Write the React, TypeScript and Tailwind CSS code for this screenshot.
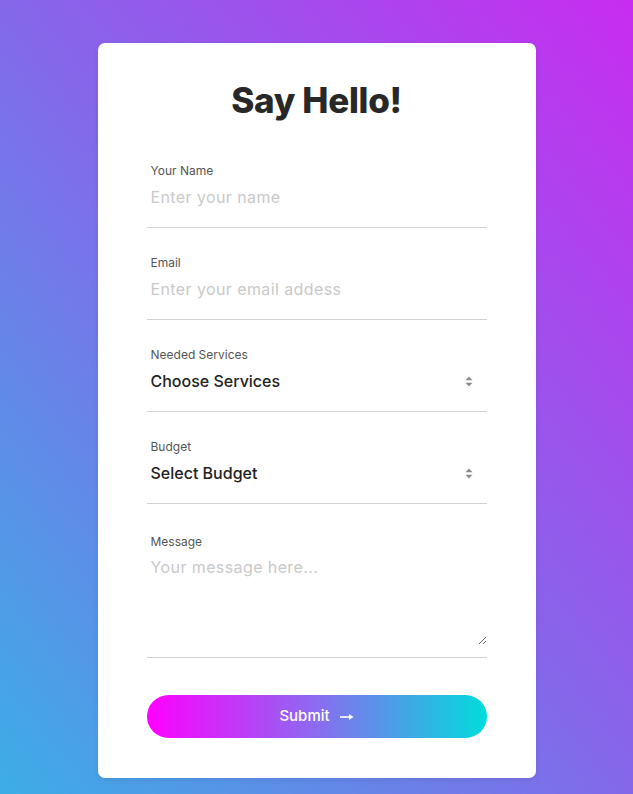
import React, { useState } from 'react';

const font = { fontFamily: 'Inter, "DejaVu Sans", sans-serif' };

function Field({ label, className, children }: { label: string; className?: string; children: React.ReactNode }) {
  return (
    <div className={'border-b-[1.5px] border-[#d2d2d2] pb-[12px] ' + (className ?? '')}>
      <label className="block h-[18px] pt-px pl-1 text-[12px] leading-[18px] text-[#555]">{label}</label>
      {children}
    </div>
  );
}

function Arrows() {
  return (
    <svg width="8" height="11" viewBox="0 0 8 11" className="text-[#8a8a8a]">
      <path d="M4 0.5 L7.5 4.2 L0.5 4.2 Z" fill="currentColor" />
      <path d="M4 10.5 L7.5 6.8 L0.5 6.8 Z" fill="currentColor" />
    </svg>
  );
}

function SelectField({ label, value }: { label: string; value: string }) {
  return (
    <Field label={label}>
      <div className="flex h-[36px] items-center justify-between pl-1 pr-[14px]">
        <span className="text-[16px] font-medium text-[#222]">{value}</span>
        <Arrows />
      </div>
    </Field>
  );
}

export default function App() {
  const [name, setName] = useState('');
  const [email, setEmail] = useState('');
  const [message, setMessage] = useState('');

  return (
    <div
      style={font}
      className="flex min-h-[794px] w-full justify-center bg-[linear-gradient(to_top_right,#3caee6,#8468ea_50%,#c82cf0)] pt-[43px] pb-[17px]"
    >
      <div className="w-[438px] rounded-[7px] bg-white px-[49px] pt-[33px] pb-[40px] shadow-[0_2px_6px_rgba(0,0,0,0.08)]">
        <h1 className="mb-[37px] text-center text-[35px] font-extrabold leading-[48px] tracking-[-0.3px] text-[#282828]">
          Say Hello!
        </h1>

        <div className="flex flex-col gap-[25px]">
          <Field label="Your Name">
            <input
              value={name}
              onChange={(e) => setName(e.target.value)}
              placeholder="Enter your name"
              className="block h-[36px] w-full pl-1 text-[16px] tracking-[0.4px] text-[#222] outline-none placeholder:text-[#c9c9c9]"
            />
          </Field>

          <Field label="Email">
            <input
              value={email}
              onChange={(e) => setEmail(e.target.value)}
              placeholder="Enter your email addess"
              className="block h-[36px] w-full pl-1 text-[16px] tracking-[0.4px] text-[#222] outline-none placeholder:text-[#c9c9c9]"
            />
          </Field>

          <SelectField label="Needed Services" value="Choose Services" />
          <SelectField label="Budget" value="Select Budget" />

          <Field label="Message" className="mt-[3px]">
            <textarea
              value={message}
              onChange={(e) => setMessage(e.target.value)}
              placeholder="Your message here..."
              className="block h-[95px] w-full pt-[5px] pl-1 text-[16px] leading-[24px] tracking-[0.4px] text-[#222] outline-none placeholder:text-[#c9c9c9]"
            />
          </Field>
        </div>

        <button className="mt-[37px] flex h-[43px] w-full items-center justify-center gap-[10px] rounded-full bg-[linear-gradient(to_right,#ff00ff,#8a6cf0_50%,#00dcdc)] text-[15px] font-medium text-white">
          Submit
          <svg width="14" height="8" viewBox="0 0 14 8">
            <path d="M0 4 H10" stroke="white" strokeWidth="1.6" />
            <path d="M9 1 L13.5 4 L9 7 Z" fill="white" />
          </svg>
        </button>
      </div>
    </div>
  );
}
